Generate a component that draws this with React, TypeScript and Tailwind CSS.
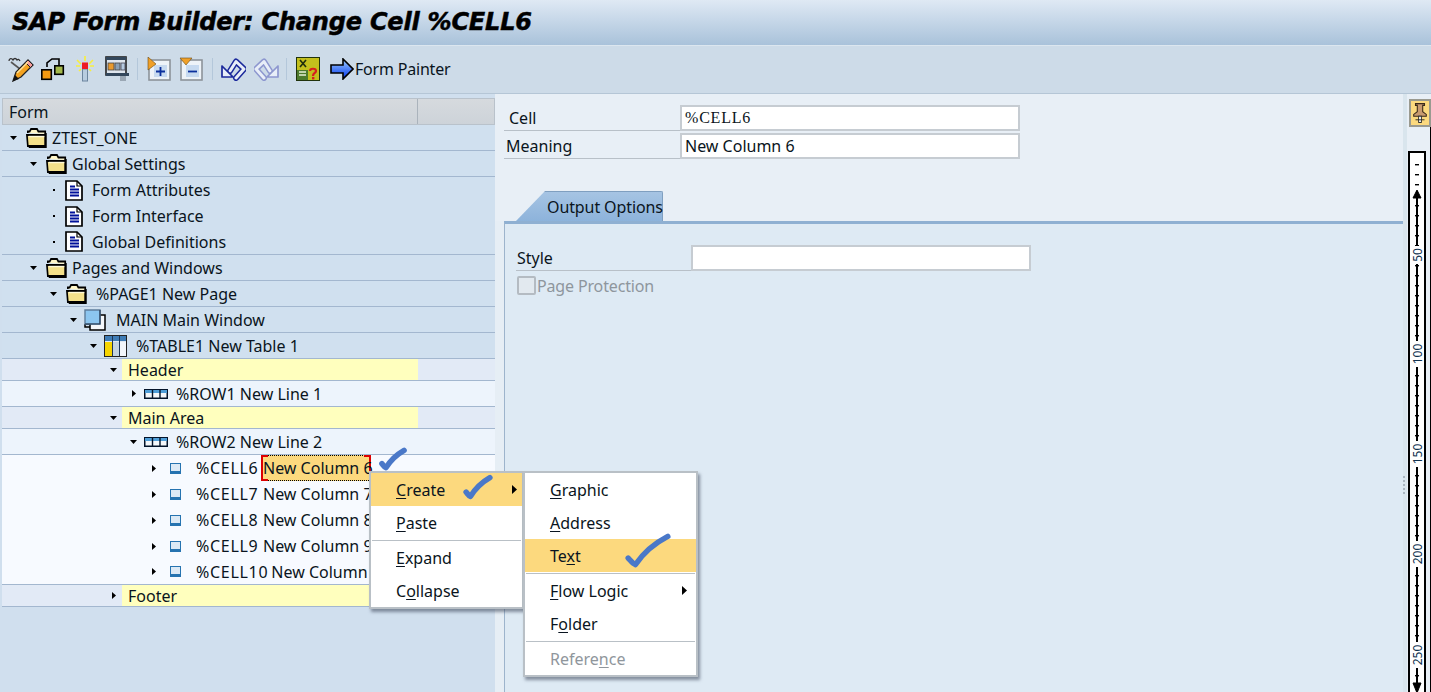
import type { ReactNode } from 'react'

const FONT = "font-['Noto_Sans',sans-serif]"

function Folder() {
  return (
    <svg width="22" height="20" viewBox="0 0 24 20" preserveAspectRatio="none" className="shrink-0">
      <path d="M2 5V3.5H4L5.5 1H12L13.5 3.5H21V6" fill="#fff6c8" stroke="#000" strokeWidth="1.8" />
      <path d="M1 7H21V18H2Z" fill="#f3e08a" stroke="#000" strokeWidth="1.8" />
      <path d="M21.5 5V19H3" fill="none" stroke="#000" strokeWidth="2.2" />
      <path d="M3 8.5H20" stroke="#fff9d8" strokeWidth="1.4" />
    </svg>
  )
}

function Doc() {
  return (
    <svg width="18" height="21" viewBox="0 0 18 21" className="shrink-0">
      <path d="M1 1H12L17 6V20H1Z" fill="#fff" stroke="#000" strokeWidth="1.7" />
      <path d="M12 1V6H17" fill="none" stroke="#000" strokeWidth="1.2" />
      <path d="M5 6.5H10M5 9.5H14M5 12.5H14M5 15.5H14" stroke="#00109a" strokeWidth="1.8" />
    </svg>
  )
}

function WindowIcon() {
  return (
    <svg width="23" height="22" viewBox="0 0 23 22" className="shrink-0">
      <path d="M6 6H21V21H6Z" fill="#f4f7fa" stroke="#000" strokeWidth="1.5" />
      <path d="M1 15H6M1 15V18H6" fill="none" stroke="#000" strokeWidth="1.5" />
      <path d="M1 1H16V15H1Z" fill="#8cc6f0" stroke="#5d7c9a" strokeWidth="1.4" />
      <path d="M1 15H16V1" fill="none" stroke="#27405c" strokeWidth="1.2" />
    </svg>
  )
}

function TableIcon() {
  return (
    <svg width="23" height="22" viewBox="0 0 23 22" className="shrink-0">
      <rect x="0.5" y="0.5" width="22" height="21" fill="#dfe8f1" stroke="#222" />
      <rect x="1" y="1" width="21" height="5" fill="#3f7cb5" />
      <rect x="1" y="7" width="7" height="14" fill="#f6d400" />
      <rect x="9" y="7" width="6" height="14" fill="#c3d3e0" />
      <rect x="16" y="7" width="6" height="14" fill="#f2f6fa" />
      <path d="M8.5 1V21M15.5 1V21" stroke="#1c3557" />
    </svg>
  )
}

function RowIcon() {
  return (
    <svg width="24" height="10" viewBox="0 0 24 10" className="shrink-0">
      <rect x="0.75" y="0.75" width="22.5" height="8.5" fill="#f4f7fa" stroke="#04142a" strokeWidth="1.5" />
      <rect x="1" y="1" width="22" height="3" fill="#4f9ed8" />
      <path d="M8.5 1V9M16 1V9" stroke="#04142a" strokeWidth="1.4" />
    </svg>
  )
}

function CellIcon() {
  return (
    <svg width="11" height="11" viewBox="0 0 11 11" className="shrink-0">
      <rect x="0.5" y="0.5" width="10" height="10" fill="#dce9f5" stroke="#2673b0" />
      <rect x="0" y="8" width="11" height="3" fill="#2673b0" />
    </svg>
  )
}

function ArrowDown() {
  return (
    <svg width="7" height="4" viewBox="0 0 7 4" className="shrink-0">
      <path d="M0 0H7L3.5 4Z" fill="#000" />
    </svg>
  )
}

function ArrowRight() {
  return (
    <svg width="4" height="7" viewBox="0 0 4 7" className="shrink-0">
      <path d="M0 0V7L4 3.5Z" fill="#000" />
    </svg>
  )
}

function MenuArrow() {
  return (
    <svg width="5" height="9" viewBox="0 0 5 9" className="shrink-0">
      <path d="M0 0V9L5 4.5Z" fill="#000" />
    </svg>
  )
}

function Dot() {
  return <span className="block h-[2px] w-[2px] bg-black" />
}

type Row = {
  label: string
  pad: string
  bg: string
  mark: 'down' | 'right' | 'dot'
  icon: ReactNode
  iconMl: string
  textMl: string
  border?: boolean
}

const ROWS: (Row | { yellow: string; mark: 'down' })[] = [
  { label: 'ZTEST_ONE', pad: 'pl-[7px]', bg: 'bg-[#d0e0ef]', mark: 'down', icon: <Folder />, iconMl: 'ml-[8px]', textMl: 'ml-[4px]', border: true },
  { label: 'Global Settings', pad: 'pl-[27px]', bg: 'bg-[#d0e0ef]', mark: 'down', icon: <Folder />, iconMl: 'ml-[8px]', textMl: 'ml-[4px]', border: true },
  { label: 'Form Attributes', pad: 'pl-[47px]', bg: 'bg-[#d0e0ef]', mark: 'dot', icon: <Doc />, iconMl: 'ml-[7px]', textMl: 'ml-[9px]' },
  { label: 'Form Interface', pad: 'pl-[47px]', bg: 'bg-[#d0e0ef]', mark: 'dot', icon: <Doc />, iconMl: 'ml-[7px]', textMl: 'ml-[9px]' },
  { label: 'Global Definitions', pad: 'pl-[47px]', bg: 'bg-[#d0e0ef]', mark: 'dot', icon: <Doc />, iconMl: 'ml-[7px]', textMl: 'ml-[9px]', border: true },
  { label: 'Pages and Windows', pad: 'pl-[27px]', bg: 'bg-[#d0e0ef]', mark: 'down', icon: <Folder />, iconMl: 'ml-[8px]', textMl: 'ml-[4px]', border: true },
  { label: '%PAGE1 New Page', pad: 'pl-[47px]', bg: 'bg-[#d0e0ef]', mark: 'down', icon: <Folder />, iconMl: 'ml-[8px]', textMl: 'ml-[8px]', border: true },
  { label: 'MAIN Main Window', pad: 'pl-[67px]', bg: 'bg-[#d0e0ef]', mark: 'down', icon: <WindowIcon />, iconMl: 'ml-[6px]', textMl: 'ml-[9px]', border: true },
  { label: '%TABLE1 New Table 1', pad: 'pl-[87px]', bg: 'bg-[#d0e0ef]', mark: 'down', icon: <TableIcon />, iconMl: 'ml-[6px]', textMl: 'ml-[9px]', border: true },
  { yellow: 'Header', mark: 'down' },
  { label: '%ROW1 New Line 1', pad: 'pl-[127px]', bg: 'bg-[#edf4fc]', mark: 'right', icon: <RowIcon />, iconMl: 'ml-[6px]', textMl: 'ml-[8px]', border: true },
  { yellow: 'Main Area', mark: 'down' },
  { label: '%ROW2 New Line 2', pad: 'pl-[127px]', bg: 'bg-[#edf4fc]', mark: 'down', icon: <RowIcon />, iconMl: 'ml-[6px]', textMl: 'ml-[8px]', border: true },
]

const CELLS = [
  { name: '%CELL6', text: 'New Column 6', selected: true },
  { name: '%CELL7', text: 'New Column 7' },
  { name: '%CELL8', text: 'New Column 8' },
  { name: '%CELL9', text: 'New Column 9' },
  { name: '%CELL10', text: 'New Column 10', last: true },
]

function Mark({ kind }: { kind: Row['mark'] }) {
  return (
    <span className="flex w-[9px] shrink-0 justify-center">
      {kind === 'down' ? <ArrowDown /> : kind === 'right' ? <ArrowRight /> : <Dot />}
    </span>
  )
}

function YellowRow({ label, mark }: { label: string; mark: 'down' | 'right' }) {
  return (
    <div className="flex h-[22px] items-center border-b border-[#a3b7cf] bg-[#e2eaf6] pl-[107px]">
      <Mark kind={mark} />
      <div className="ml-[4px] flex h-full w-[296px] items-center bg-[#ffffbe] pl-[6px]">{label}</div>
    </div>
  )
}

function TreeRow({ row }: { row: Row }) {
  return (
    <div className={`flex h-[26px] items-center ${row.bg} ${row.pad} ${row.border ? 'border-b border-[#a3b7cf]' : ''}`}>
      <Mark kind={row.mark} />
      <span className={`flex ${row.iconMl}`}>{row.icon}</span>
      <span className={row.textMl}>{row.label}</span>
    </div>
  )
}

function CellRow({ name, text, selected, last }: { name: string; text: string; selected?: boolean; last?: boolean }) {
  return (
    <div className={`flex h-[26px] items-center bg-[#f7faff] pl-[147px] ${last ? 'border-b border-[#a3b7cf]' : ''}`}>
      <Mark kind="right" />
      <span className="ml-[12px] flex">
        <CellIcon />
      </span>
      <span className="ml-[15px] min-w-[65px] whitespace-nowrap pr-[1px] tracking-[0.7px]">{name}</span>
      {selected ? (
        <span className="relative flex h-[26px] w-[110px] items-center whitespace-nowrap border-x-2 border-y border-x-[#dd0000] border-y-black bg-[#fcd97e] [border-top-style:dotted] [border-bottom-style:dotted]">
          {text}
          <span className="absolute -left-[2px] -top-px h-[2px] w-[7px] bg-[#dd0000]" />
          <span className="absolute -left-[2px] -bottom-px h-[2px] w-[7px] bg-[#dd0000]" />
          <span className="absolute -right-[2px] -top-px h-[2px] w-[7px] bg-[#dd0000]" />
        </span>
      ) : (
        <span className="ml-[2px] whitespace-nowrap">{text}</span>
      )}
    </div>
  )
}

function Field({ label, value, serif, labelPad, labelW, inputW }: { label: string; value?: string; serif?: boolean; labelPad: string; labelW: string; inputW: string }) {
  return (
    <div className="flex h-[26px]">
      <div className={`flex items-center ${labelW} ${labelPad} border-b border-[#b8c0c8]`}>{label}</div>
      <div
        className={`flex h-[26px] ${inputW} items-center border-2 border-[#c6ccd2] bg-white pl-[3px] ${serif ? "font-['Liberation_Serif',serif] tracking-[0.8px]" : ''}`}
      >
        {value}
      </div>
    </div>
  )
}

function ToolPencil() {
  return (
    <svg width="26" height="26" viewBox="0 0 26 26">
      <path d="M1 5C1 2 4 2 5 4C6 2 8 2 9 4C10 3 11 3 12 5" fill="none" stroke="#333" strokeWidth="1.3" />
      <path d="M3 6L12 13" stroke="#555" strokeWidth="1.6" />
      <path d="M5 25L8 16L20 4L25 9L13 21Z" fill="#f3a21f" stroke="#222" strokeWidth="1.3" />
      <path d="M20 4L25 9L22.5 11.5L17.5 6.5Z" fill="#f59a9a" stroke="#222" />
      <path d="M9 17L20 6" stroke="#fde29a" strokeWidth="1.5" />
      <path d="M5 25L7 19L11 23Z" fill="#111" />
    </svg>
  )
}

function ToolHierarchy() {
  return (
    <svg width="24" height="24" viewBox="0 0 24 24">
      <path d="M6 10V6L11 2H18V8" fill="none" stroke="#000" strokeWidth="1.6" />
      <rect x="0.8" y="12.8" width="9.5" height="9.5" fill="#f59a12" stroke="#000" strokeWidth="1.6" />
      <rect x="13.8" y="8.8" width="8.5" height="8.5" fill="#a3b84a" stroke="#000" strokeWidth="1.6" />
    </svg>
  )
}

function ToolWand() {
  return (
    <svg width="20" height="26" viewBox="0 0 20 26">
      <path d="M10 0V5M2 4L6 8M18 4L14 8M1 10H5M15 10H19M4 15L6 13M16 15L14 13" stroke="#f8ef3c" strokeWidth="1.6" />
      <rect x="7.5" y="13" width="5" height="12" fill="#b8ccdf" stroke="#6c859e" />
      <rect x="7" y="6.5" width="6" height="6.5" fill="#ee1b24" />
    </svg>
  )
}

function ToolForm() {
  return (
    <svg width="24" height="26" viewBox="0 0 24 26">
      <rect x="1" y="1" width="20" height="18" fill="#dfe6ee" stroke="#222" strokeWidth="1.6" />
      <rect x="1" y="1" width="20" height="3" fill="#33475c" />
      <rect x="1" y="17" width="23" height="3" fill="#33475c" />
      <rect x="3" y="7" width="6" height="7" fill="#e99a2e" stroke="#444" strokeWidth="0.8" />
      <rect x="10" y="7" width="5" height="7" fill="#8ba0b5" stroke="#444" strokeWidth="0.8" />
      <rect x="16" y="7" width="4" height="7" fill="#b6cae0" stroke="#445" strokeWidth="0.8" />
      <rect x="15" y="20" width="6" height="5" fill="#9aa7b4" />
    </svg>
  )
}

function ToolInsert() {
  return (
    <svg width="24" height="24" viewBox="0 0 24 24">
      <rect x="2" y="3" width="21" height="20" fill="#eef3f8" stroke="#8d9399" strokeWidth="1.6" />
      <rect x="7" y="8" width="13" height="12" fill="#c7daf0" />
      <path d="M1 0L9 7L1 13Z" fill="#f0a028" stroke="#6b4a10" strokeWidth="0.6" />
      <path d="M13.5 10V19M9 14.5H18" stroke="#0b2f9c" strokeWidth="1.8" />
    </svg>
  )
}

function ToolRemove() {
  return (
    <svg width="24" height="24" viewBox="0 0 24 24">
      <rect x="2" y="3" width="21" height="20" fill="#eef3f8" stroke="#8d9399" strokeWidth="1.6" />
      <rect x="7" y="8" width="13" height="12" fill="#c7daf0" />
      <path d="M1 1H13L7 8Z" fill="#f0a028" stroke="#6b4a10" strokeWidth="0.6" />
      <path d="M9 14.5H18" stroke="#0b2f9c" strokeWidth="1.8" />
    </svg>
  )
}

function ToolCurve({ color, flip }: { color: string; flip?: boolean }) {
  return (
    <svg width="25" height="24" viewBox="0 0 25 24" className={flip ? '-scale-x-100' : ''}>
      <path d="M9 14L15 4.5L23 12L15 21" fill="none" stroke={color} strokeWidth="6" strokeLinejoin="round" strokeLinecap="round" />
      <path d="M9 14L15 4.5L23 12L15 21" fill="none" stroke="#e8eef8" strokeWidth="3" strokeLinejoin="round" strokeLinecap="round" />
      <path d="M1 9V20H12Z" fill="#e8eef8" stroke={color} strokeWidth="1.7" strokeLinejoin="round" />
    </svg>
  )
}

function ToolCheck() {
  return (
    <svg width="24" height="24" viewBox="0 0 24 24">
      <rect x="0.5" y="0.5" width="23" height="23" fill="#c3bf1d" stroke="#20320c" />
      <rect x="1" y="13" width="11" height="10" fill="#4d7a2d" />
      <path d="M4 3L10 10M10 3L4 10" stroke="#1d2c0e" strokeWidth="1.6" />
      <path d="M3 15H10M3 18H10" stroke="#e8efd6" strokeWidth="1.6" />
      <path d="M14 14C14 11 20 11 20 14C20 16 17 16 17 19" fill="none" stroke="#d61f1f" strokeWidth="2.2" />
      <rect x="16" y="20" width="2.4" height="2.4" fill="#d61f1f" />
    </svg>
  )
}

function ToolArrow() {
  return (
    <svg width="24" height="22" viewBox="0 0 24 22">
      <defs>
        <linearGradient id="arrowFill" x1="0" y1="0" x2="0" y2="1">
          <stop offset="0" stopColor="#9fd0ff" />
          <stop offset="1" stopColor="#0033ee" />
        </linearGradient>
      </defs>
      <path d="M1 7H13V1L23 11L13 21V15H1Z" fill="url(#arrowFill)" stroke="#000" strokeWidth="1.6" />
    </svg>
  )
}

function Sep() {
  return <span className="h-[22px] w-px bg-[#b4c7da]" />
}

function Pin() {
  return (
    <svg width="18" height="25" viewBox="0 0 20 24">
      <path d="M5 1H15V3H13V10L17 13V15H3V13L7 10V3H5Z" fill="#c89a70" stroke="#3c2a1a" strokeWidth="1.2" />
      <rect x="8.5" y="15" width="3" height="7" fill="#fff" stroke="#222" />
      <path d="M5 19H15" stroke="#222" />
    </svg>
  )
}

function Ruler() {
  const ticks: number[] = []
  for (let i = 0; i < 48; i++) ticks.push(i)
  return (
    <svg width="18" height="541" viewBox="0 0 18 541" className="block">
      {[0, 1, 2].map((i) => (
        <rect key={i} x="7" y={11 + i * 10} width="4" height="1.4" fill="#000" />
      ))}
      <path d="M9 38V536" stroke="#000" strokeWidth="2" />
      <path d="M5 45L9 37L13 45Z" fill="#000" stroke="#000" />
      <path d="M5 530L9 540L13 530Z" fill="#000" stroke="#000" />
      {ticks.map((i) => (
        <rect key={i} x="7" y={52 + i * 10} width="4" height="1.4" fill="#000" />
      ))}
      {[
        { y: 102, t: '50' },
        { y: 201, t: '100' },
        { y: 301, t: '150' },
        { y: 401, t: '200' },
        { y: 502, t: '250' },
      ].map((m) => (
        <g key={m.t} transform={`translate(13.5 ${m.y}) rotate(-90)`}>
          <rect x={m.t.length === 2 ? -9 : -13} y="-11" width={m.t.length === 2 ? 18 : 26} height="12" fill="#fff" />
          <text textAnchor="middle" fontSize="12" fill="#10324f" fontFamily="Noto Sans, sans-serif">
            {m.t}
          </text>
        </g>
      ))}
    </svg>
  )
}

function Check({ className, w, h }: { className: string; w: number; h: number }) {
  return (
    <svg width={w} height={h} viewBox="0 0 48 36" preserveAspectRatio="none" className={`pointer-events-none absolute ${className}`}>
      <path
        d="M5 25C7 27 9 30 12 31C19 21 31 11 43 5"
        fill="none"
        stroke="#4a78c8"
        strokeWidth="5.5"
        strokeLinecap="round"
        strokeLinejoin="round"
        vectorEffect="non-scaling-stroke"
      />
    </svg>
  )
}

function MenuItem({ children, active, arrow, disabled }: { children: ReactNode; active?: boolean; arrow?: string; disabled?: boolean }) {
  return (
    <div className={`flex h-[33px] items-center justify-between ${active ? 'bg-[#fcd97e]' : ''} ${disabled ? 'text-[#8f969c]' : ''}`}>
      <span className="whitespace-nowrap pl-[25px]">{children}</span>
      {arrow && (
        <span className={arrow}>
          <MenuArrow />
        </span>
      )}
    </div>
  )
}

function MenuSep() {
  return <div className="mx-[1px] h-[2px] border-b border-[#b9c0c6]" />
}

export default function App() {
  return (
    <div className={`relative flex h-[692px] w-[1431px] flex-col overflow-hidden bg-[#d0dfee] text-[16px] leading-none text-[#0a1420] ${FONT}`}>
      {/* Title */}
      <div className="flex h-[46px] shrink-0 items-center border-b border-[#dce6ef] bg-gradient-to-b from-[#dfe9f4] to-[#a9c2da] pl-[12px]">
        <h1 className="whitespace-nowrap pb-[1px] font-['DejaVu_Sans',sans-serif] text-[24px] font-bold italic tracking-[-0.2px] text-black [-webkit-text-stroke:0.5px_black]">
          SAP Form Builder: Change Cell %CELL6
        </h1>
      </div>

      {/* Toolbar */}
      <div className="flex h-[48px] shrink-0 items-center border-b border-[#b5c6d6] bg-[#cddbe8] pb-[2px] pl-[8px]">
        <ToolPencil />
        <span className="ml-[7px] flex"><ToolHierarchy /></span>
        <span className="ml-[10px] flex"><ToolWand /></span>
        <span className="ml-[10px] flex"><ToolForm /></span>
        <span className="ml-[8px] flex"><Sep /></span>
        <span className="ml-[9px] flex"><ToolInsert /></span>
        <span className="ml-[8px] flex"><ToolRemove /></span>
        <span className="ml-[9px] flex"><Sep /></span>
        <span className="ml-[8px] flex"><ToolCurve color="#1c2a9c" /></span>
        <span className="ml-[8px] flex"><ToolCurve color="#8d97cf" flip /></span>
        <span className="ml-[7px] flex"><Sep /></span>
        <span className="ml-[9px] flex"><ToolCheck /></span>
        <span className="ml-[10px] flex"><ToolArrow /></span>
        <span className="ml-[1px] whitespace-nowrap tracking-[-0.2px]">Form Painter</span>
      </div>

      {/* Body */}
      <div className="flex min-h-0 flex-1">
        {/* Tree */}
        <div className="flex w-[495px] shrink-0 flex-col pl-[2px] pt-[4px]">
          <div className="flex h-[27px] shrink-0 items-center border border-[#b9c2cb] bg-gradient-to-b from-[#d6dade] to-[#cdd3d9]">
            <span className="flex h-full w-[415px] items-center border-r border-[#aab3bc] pl-[6px]">Form</span>
          </div>
          {ROWS.map((r) =>
            'yellow' in r ? <YellowRow key={r.yellow} label={r.yellow} mark={r.mark} /> : <TreeRow key={r.label} row={r} />,
          )}
          {CELLS.map((c) => (
            <CellRow key={c.name} {...c} />
          ))}
          <YellowRow label="Footer" mark="right" />
        </div>

        {/* Sash and right panel */}
        <div className="flex min-w-0 flex-1 flex-col">
          <div className="flex h-[127px] shrink-0 flex-col bg-[#e8eff6] pl-[9px] pt-[11px]">
            <Field label="Cell" value="%CELL6" serif labelPad="pl-[5px]" labelW="w-[176px]" inputW="w-[340px]" />
            <div className="h-[2px]" />
            <Field label="Meaning" value="New Column 6" labelPad="pl-[2px]" labelW="w-[176px]" inputW="w-[340px]" />
            <div className="mt-[32px] flex h-[30px] pl-[12px]">
              <div className="flex w-[147px] items-center whitespace-nowrap rounded-tr-[2px] border-r border-t border-[#7f9fc0] bg-gradient-to-b from-[#a6c4e3] to-[#8db3db] pl-[31px] tracking-[-0.1px] [clip-path:polygon(29px_0,100%_0,100%_100%,0_100%)]">
                Output Options
              </div>
            </div>
          </div>
          <div className="flex flex-1 bg-[#e6eef5]">
            <div className="w-[9px] shrink-0" />
            <div className="flex-1 border-l border-t-[3px] border-l-[#9db4cc] border-t-[#8fb0d2] bg-[#deeaf4] pl-[11px] pt-[21px]">
              <Field label="Style" labelPad="pl-[1px]" labelW="w-[175px]" inputW="w-[340px]" />
              <div className="mt-[5px] flex items-center text-[#8e969d]">
                <span className="ml-[1px] h-[19px] w-[19px] rounded-[2px] border-2 border-[#b4bbc2] bg-[#e2e9ef]" />
                <span className="ml-[1px] tracking-[-0.15px]">Page Protection</span>
              </div>
            </div>
          </div>
        </div>

        {/* Ruler column */}
        <div className="flex w-[28px] shrink-0 border-l-[4px] border-[#d9e5ed] bg-[#e8eff6] pl-[1px]">
          <div className="flex w-[22px] flex-col">
            <div className="ml-[1px] mt-[5px] flex h-[28px] w-[22px] shrink-0 items-center justify-center border-2 border-[#9a9a90] bg-[#fcd97e]">
              <Pin />
            </div>
            <div className="mt-[24px] w-[18px] flex-1 border-2 border-b-0 border-black bg-white">
              <div className="-ml-[2px]">
                <Ruler />
              </div>
            </div>
          </div>
          <div className="mt-[33px] w-[1px] bg-black" />
        </div>
      </div>

      {/* Sash grip */}
      <div className="absolute left-[1403px] top-[476px] flex flex-col gap-[2px]">
        {[0, 1, 2, 3, 4].map((i) => (
          <span key={i} className="h-[2px] w-[2px] bg-[#a9b5c0]" />
        ))}
      </div>

      {/* Context menus */}
      <div className="absolute left-[369px] top-[471px] w-[155px] border-2 border-[#b9c0c6] bg-white shadow-[2px_3px_3px_rgba(60,70,90,0.55)]">
        <MenuItem active arrow="pr-[5px]">
          <span className="underline underline-offset-2">C</span>reate
        </MenuItem>
        <MenuItem>
          <span className="underline underline-offset-2">P</span>aste
        </MenuItem>
        <MenuSep />
        <MenuItem>
          <span className="underline underline-offset-2">E</span>xpand
        </MenuItem>
        <MenuItem>
          C<span className="underline underline-offset-2">o</span>llapse
        </MenuItem>
      </div>
      <div className="absolute left-[523px] top-[471px] w-[175px] border-2 border-[#b9c0c6] bg-white shadow-[2px_3px_3px_rgba(60,70,90,0.55)]">
        <MenuItem>
          <span className="underline underline-offset-2">G</span>raphic
        </MenuItem>
        <MenuItem>
          <span className="underline underline-offset-2">A</span>ddress
        </MenuItem>
        <MenuItem active>
          Te<span className="underline underline-offset-2">x</span>t
        </MenuItem>
        <MenuSep />
        <MenuItem arrow="pr-[9px]">
          <span className="underline underline-offset-2">F</span>low Logic
        </MenuItem>
        <MenuItem>
          F<span className="underline underline-offset-2">o</span>lder
        </MenuItem>
        <MenuSep />
        <MenuItem disabled>
          Refere<span className="underline underline-offset-2">n</span>ce
        </MenuItem>
      </div>

      {/* Hand-drawn check marks */}
      <Check className="left-[379px] top-[447px]" w={28} h={24} />
      <Check className="left-[463px] top-[474px]" w={30} h={26} />
      <Check className="left-[623px] top-[531px]" w={50} h={39} />
    </div>
  )
}
